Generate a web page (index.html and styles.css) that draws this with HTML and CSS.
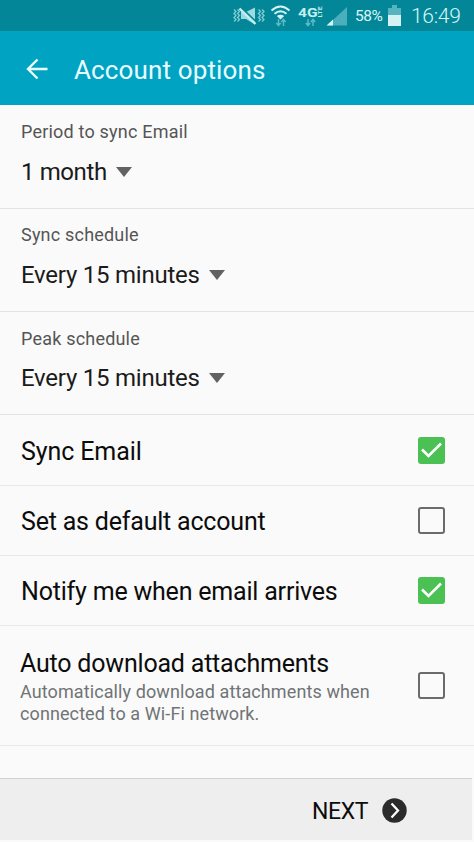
FILE: index.html
```html
<!DOCTYPE html>
<html lang="en">
<head>
<meta charset="utf-8">
<title>Account options</title>
<link rel="stylesheet" href="styles.css">
</head>
<body>
<div class="screen">
  <div class="status">
    <svg class="status-icons" width="131" height="31" viewBox="224 0 131 31">
      <g fill="none" stroke="#9fdde3" stroke-width="1.300">
        <path d="M234 9.500l2 2-2 2 2 2-2 2 2 2-2 2M237.500 9.500l2 2-2 2 2 2-2 2 2 2-2 2" opacity=".8"/>
        <path d="M258.500 9.500l2 2-2 2 2 2-2 2 2 2-2 2M262 9.500l2 2-2 2 2 2-2 2 2 2-2 2" opacity=".8"/>
      </g>
      <path d="M241 12h5l9-4.500v17l-9-5.500h-5z" fill="#9edbe1"/>
      <path d="M240.500 7l16 15.500" stroke="#0b8595" stroke-width="2"/>
      <path d="M239.500 8.500l16 15.500" stroke="#c5eef1" stroke-width="2.400"/>
      <g fill="none" stroke="#d5f3f5" stroke-width="2">
        <path d="M271.500 10.500q9-8 18 0"/>
        <path d="M274.500 13.800q6-5 12 0"/>
      </g>
      <path d="M276.800 16q3.700-2.500 7.400 0l-3.700 3.500z" fill="#d5f3f5"/>
      <g fill="none" stroke="#5bbac6" stroke-width="1.500">
        <path d="M278.500 19v6.500m-2.200-2.500l2.200 2.500 2.200-2.500M283.500 26v-6.500m-2.200 2.500l2.200-2.500 2.200 2.500"/>
        <path d="M308 19v6.500m-2.200-2.500l2.200 2.500 2.200-2.500M313 26v-6.500m-2.200 2.500l2.200-2.500 2.200 2.500"/>
      </g>
      <text class="net" x="298" y="17" textLength="19.500" lengthAdjust="spacingAndGlyphs">4G</text>
      <text class="lte" transform="translate(322.300 17.500) rotate(-90)" textLength="11" lengthAdjust="spacingAndGlyphs">LTE</text>
      <path d="M347 7v18.500h-20z" fill="#4aaebb"/>
      <path d="M333 19.500v6h-6.500z" fill="#d5f3f5"/>
    </svg>
    <span class="percent">58%</span>
    <svg class="battery" width="13" height="21" viewBox="0 0 13 21">
      <path d="M4 0h5v3h4v7H0V3h4z" fill="#55b4c0"/>
      <path d="M0 10h13v11H0z" fill="#d5f1f3"/>
    </svg>
    <span class="clock">16:49</span>
  </div>
  <header class="appbar">
    <svg width="22" height="22" viewBox="0 0 22 22" fill="none" stroke="#eafcff" stroke-width="2.400"><path d="M21.500 11H2M11.500 1.500L2 11l9.500 9.500"/></svg>
    <h1 class="title">Account options</h1>
  </header>
  <main class="options">
    <section class="select first">
      <div class="label">Period to sync Email</div>
      <div class="value"><span class="short">1 month</span><i class="caret"></i></div>
    </section>
    <section class="select">
      <div class="label">Sync schedule</div>
      <div class="value"><span>Every 15 minutes</span><i class="caret"></i></div>
    </section>
    <section class="select last">
      <div class="label">Peak schedule</div>
      <div class="value"><span>Every 15 minutes</span><i class="caret"></i></div>
    </section>
    <section class="check tall">
      <span class="name">Sync Email</span>
      <span class="box on"><svg viewBox="0 0 27 27"><path d="M4 12.500l6.500 6.500L23 6.500"/></svg></span>
    </section>
    <section class="check">
      <span class="name">Set as default account</span>
      <span class="box"></span>
    </section>
    <section class="check">
      <span class="name">Notify me when email arrives</span>
      <span class="box on"><svg viewBox="0 0 27 27"><path d="M4 12.500l6.500 6.500L23 6.500"/></svg></span>
    </section>
    <section class="check detail">
      <div class="copy">
        <div class="name">Auto download attachments</div>
        <div class="desc">Automatically download attachments when<br>connected to a Wi-Fi network.</div>
      </div>
      <span class="box"></span>
    </section>
  </main>
  <footer class="footer">
    <span class="next">NEXT</span>
    <svg width="25" height="25" viewBox="0 0 25 25"><circle cx="12.500" cy="12.500" r="12.200" fill="#2b2b2b"/><path d="M9.500 5.500l6.500 7-6.500 7" fill="none" stroke="#fff" stroke-width="2.300"/></svg>
  </footer>
</div>
</body>
</html>
```

FILE: styles.css
```css
* { box-sizing: border-box; }
body { margin: 0; font-family: Roboto, "Liberation Sans", sans-serif; background: #fafafa; }
.screen { width: 474px; height: 842px; display: flex; flex-direction: column; padding-bottom: 2px; background: #fafafa; overflow: hidden; white-space: nowrap; }
.status { height: 31px; flex: none; display: flex; align-items: center; padding-left: 224px; background: #038798; color: #d8f6f8; }
.status-icons { flex: none; }
.net { font-size: 13px; font-weight: 700; fill: #c5eef1; }
.lte { font-size: 5px; font-weight: 700; fill: #c5eef1; }
.percent { width: 33px; font-size: 15.5px; line-height: 31px; padding-top: 1px; letter-spacing: -0.5px; }
.battery { flex: none; }
.clock { margin-left: 10px; font-size: 21px; line-height: 31px; padding-top: 2px; font-weight: 300; letter-spacing: -0.3px; }
.appbar { height: 74px; flex: none; display: flex; align-items: center; padding: 2px 0 0 26px; gap: 26px; background: #00a4c2; color: #eafcff; }
.title { margin: 0; padding-top: 2px; font-size: 26px; line-height: 36px; font-weight: 400; letter-spacing: 0.13px; }
.options { flex: 1; }
.select { height: 103px; padding: 14px 21px 0; border-bottom: 1px solid #e3e3e3; }
.first { height: 104px; padding-top: 15px; }
.last { padding-top: 15px; }
.label { font-size: 18px; line-height: 24px; color: #555; letter-spacing: 0.2px; }
.value { display: flex; align-items: center; gap: 9px; margin-top: 12px; font-size: 24px; line-height: 32px; color: #1b1b1b; letter-spacing: -0.23px; }
.last .value { margin-top: 11px; }
.short { letter-spacing: -0.4px; }
.caret { border: 8.5px solid transparent; border-top: 10px solid #626262; border-bottom: 0; }
.check { height: 70px; display: flex; align-items: center; justify-content: space-between; padding: 0 29px 0 21px; border-bottom: 1px solid #e8e8e8; }
.tall { height: 71px; }
.detail { height: 120px; padding-left: 20px; }
.name { font-size: 25px; line-height: 32px; color: #0c0c0c; padding-top: 2px; letter-spacing: -0.2px; }
.tall .name { padding-top: 3px; letter-spacing: -0.1px; }
.detail .name { padding: 0; }
.desc { padding-top: 1px; font-size: 18px; line-height: 22px; color: #707476; letter-spacing: 0.1px; }
.detail .copy { padding-top: 2px; }
.box { width: 27px; height: 27px; flex: none; border: 2px solid #6b6b6b; border-radius: 3px; }
.box.on { border: 0; background: #4bc153; }
.box svg { display: block; fill: none; stroke: #fff; stroke-width: 2.6; }
.footer { height: 62px; flex: none; display: flex; align-items: center; padding: 2px 0 0 312px; margin-right: 2px; gap: 14px; background: #eee; border-top: 1px solid #cfcfcf; }
.next { padding-top: 2px; font-size: 23px; line-height: 30px; color: #0c0c0c; letter-spacing: -0.4px; }
```
